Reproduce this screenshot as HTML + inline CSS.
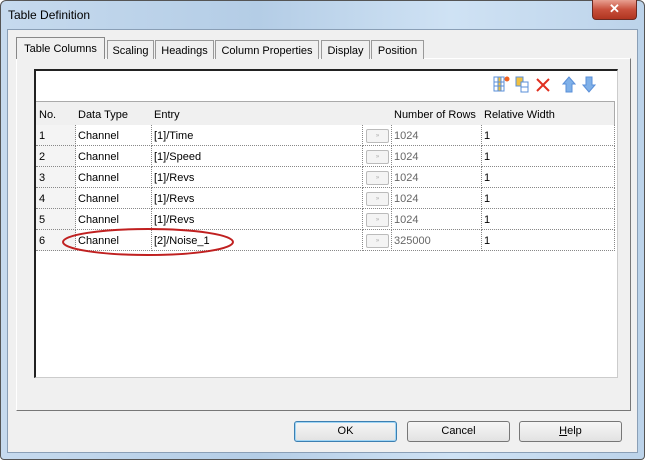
<!DOCTYPE html>
<html><head><style>
*{margin:0;padding:0;box-sizing:border-box}
body{width:646px;height:461px;overflow:hidden;font-family:"Liberation Sans",sans-serif;font-size:11px;color:#000;background:#fff}
.win{position:absolute;left:0;top:0;width:645px;height:460px;border:1px solid #555;border-radius:6px 6px 4px 4px;background:linear-gradient(90deg,#c6daee,#b4cde6 40%,#cfe2f4 70%,#bcd3ea)}
.title{position:absolute;left:8px;top:8px;font-size:12px}
.close{position:absolute;left:592px;top:0;width:45px;height:20px;border:1px solid #6b2a22;border-top:none;border-radius:0 0 4px 4px;background:linear-gradient(#e8a092,#c8503c 50%,#b03520);color:#fff;font-weight:bold;text-align:center;font-size:13px;line-height:18px}
.client{position:absolute;left:7px;top:29px;width:631px;height:424px;background:#f0f0f0;border:1px solid #8a9fb6}
.tab{position:absolute;top:40px;height:19px;border:1px solid #999;border-bottom:none;background:#f0f0f0;padding-top:4px;text-align:center;white-space:nowrap}
.panel{position:absolute;left:16px;top:58px;width:615px;height:353px;border:1px solid #fff;border-right:1px solid #777;border-bottom:1px solid #777;background:#f0f0f0}
.lv{position:absolute;left:34px;top:69px;width:584px;height:309px;background:#fff;border:1px solid #ccc;border-top:2px solid #222;border-left:2px solid #222}
.hdr{position:absolute;top:101px;height:24px;border-top:1px solid #aaa;border-right:1px solid #aaa;background:#f0f0f0;padding:7px 3px}
.cell{position:absolute;height:21px;border-bottom:1px dotted #888;border-right:1px dotted #888;padding:5px 3px 0;white-space:nowrap}
.g{color:#666}
.btn{position:absolute;top:421px;height:21px;width:103px;border:1px solid #777;border-radius:3px;background:linear-gradient(#f6f6f6,#e2e2e2);text-align:center;line-height:19px;font-size:11px}
.sb{position:absolute;left:366px;width:23px;height:14px;border:1px solid #bbb;border-radius:2px;background:#f4f4f4;font-size:6px;color:#aaa;text-align:center;line-height:12px}
</style></head><body>
<div class="win"></div>
<div class="title">Table Definition</div>
<div class="close">✕</div>
<div class="client"></div>
<div class="panel"></div>
<div class="tab" style="left:16px;top:37px;width:89px;height:22px;padding-top:5px;border-color:#888">Table Columns</div>
<div class="tab" style="left:107px;width:47px">Scaling</div>
<div class="tab" style="left:155px;width:59px">Headings</div>
<div class="tab" style="left:215px;width:104px">Column Properties</div>
<div class="tab" style="left:321px;width:49px">Display</div>
<div class="tab" style="left:371px;width:53px">Position</div>
<div class="lv"></div>
<svg style="position:absolute;left:492px;top:74px" width="110" height="20">
<g stroke="#5a8fd8" fill="none"><rect x="2" y="3" width="10" height="14" fill="#fff"/><rect x="6" y="3" width="3" height="14" fill="#f0c040"/><line x1="2" y1="8" x2="12" y2="8"/><line x1="2" y1="12" x2="12" y2="12"/></g>
<circle cx="15" cy="5" r="2.5" fill="#f06020"/>
<g stroke="#5a8fd8" fill="none"><rect x="24" y="3" width="7" height="9" fill="#f0c040"/><rect x="29" y="8" width="7" height="10" fill="#fff"/><line x1="29" y1="13" x2="36" y2="13"/></g>
<path d="M45 5L57 17M57 5L45 17" stroke="#e03020" stroke-width="2"/>
<path d="M77 3L71 10H74V18H80V10H83Z" fill="#7fb0e8" stroke="#5a8fd8"/>
<path d="M97 18L91 11H94V3H100V11H103Z" fill="#7fb0e8" stroke="#5a8fd8"/>
</svg>
<div class="hdr" style="left:36px;width:40px">No.</div>
<div class="hdr" style="left:75px;width:77px">Data Type</div>
<div class="hdr" style="left:151px;width:212px">Entry</div>
<div class="hdr" style="left:362px;width:30px"></div>
<div class="hdr" style="left:391px;width:91px">Number of Rows</div>
<div class="hdr" style="left:481px;width:134px">Relative Width</div>
<div class="cell" style="left:36px;top:125px;width:40px;background:#f4f4f4">1</div><div class="cell" style="left:75px;top:125px;width:77px">Channel</div><div class="cell" style="left:151px;top:125px;width:212px">[1]/Time</div><div class="cell" style="left:362px;top:125px;width:30px"></div><div class="sb" style="top:129px">»</div><div class="cell g" style="left:391px;top:125px;width:91px">1024</div><div class="cell" style="left:481px;top:125px;width:134px">1</div>
<div class="cell" style="left:36px;top:146px;width:40px;background:#f4f4f4">2</div><div class="cell" style="left:75px;top:146px;width:77px">Channel</div><div class="cell" style="left:151px;top:146px;width:212px">[1]/Speed</div><div class="cell" style="left:362px;top:146px;width:30px"></div><div class="sb" style="top:150px">»</div><div class="cell g" style="left:391px;top:146px;width:91px">1024</div><div class="cell" style="left:481px;top:146px;width:134px">1</div>
<div class="cell" style="left:36px;top:167px;width:40px;background:#f4f4f4">3</div><div class="cell" style="left:75px;top:167px;width:77px">Channel</div><div class="cell" style="left:151px;top:167px;width:212px">[1]/Revs</div><div class="cell" style="left:362px;top:167px;width:30px"></div><div class="sb" style="top:171px">»</div><div class="cell g" style="left:391px;top:167px;width:91px">1024</div><div class="cell" style="left:481px;top:167px;width:134px">1</div>
<div class="cell" style="left:36px;top:188px;width:40px;background:#f4f4f4">4</div><div class="cell" style="left:75px;top:188px;width:77px">Channel</div><div class="cell" style="left:151px;top:188px;width:212px">[1]/Revs</div><div class="cell" style="left:362px;top:188px;width:30px"></div><div class="sb" style="top:192px">»</div><div class="cell g" style="left:391px;top:188px;width:91px">1024</div><div class="cell" style="left:481px;top:188px;width:134px">1</div>
<div class="cell" style="left:36px;top:209px;width:40px;background:#f4f4f4">5</div><div class="cell" style="left:75px;top:209px;width:77px">Channel</div><div class="cell" style="left:151px;top:209px;width:212px">[1]/Revs</div><div class="cell" style="left:362px;top:209px;width:30px"></div><div class="sb" style="top:213px">»</div><div class="cell g" style="left:391px;top:209px;width:91px">1024</div><div class="cell" style="left:481px;top:209px;width:134px">1</div>
<div class="cell" style="left:36px;top:230px;width:40px;background:#f4f4f4">6</div><div class="cell" style="left:75px;top:230px;width:77px">Channel</div><div class="cell" style="left:151px;top:230px;width:212px">[2]/Noise_1</div><div class="cell" style="left:362px;top:230px;width:30px"></div><div class="sb" style="top:234px">»</div><div class="cell g" style="left:391px;top:230px;width:91px">325000</div><div class="cell" style="left:481px;top:230px;width:134px">1</div>
<svg style="position:absolute;left:60px;top:226px" width="180" height="36"><ellipse cx="88" cy="16" rx="85" ry="13" fill="none" stroke="#c02020" stroke-width="2"/></svg>
<div class="btn" style="left:294px;border-color:#3c7fb1;box-shadow:inset 0 0 0 1px #9fd5f5">OK</div>
<div class="btn" style="left:407px">Cancel</div>
<div class="btn" style="left:519px"><u>H</u>elp</div>
</body></html>
